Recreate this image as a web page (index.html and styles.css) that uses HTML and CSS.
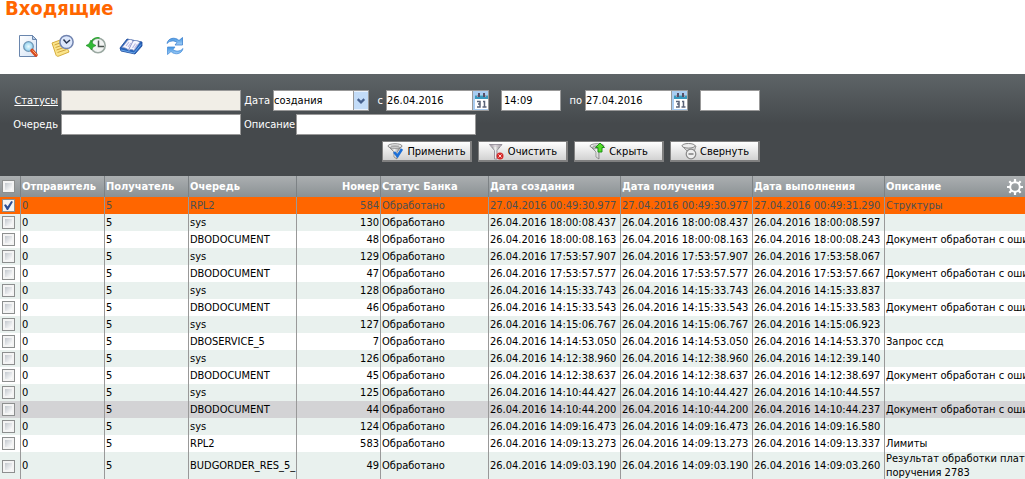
FILE: index.html
```
<!DOCTYPE html>
<html lang="ru">
<head>
<meta charset="utf-8">
<title>Входящие</title>
<link rel="stylesheet" href="styles.css">
</head>
<body>
<svg class="defs" width="0" height="0" aria-hidden="true">
  <defs>
    <linearGradient id="metal" x1="0" x2="1" y1="0" y2="0"><stop offset="0" stop-color="#555"/><stop offset=".45" stop-color="#f4f4f4"/><stop offset="1" stop-color="#666"/></linearGradient>
    <linearGradient id="paper" x1="0" x2="1" y1="0" y2="1"><stop offset="0" stop-color="#fff"/><stop offset="1" stop-color="#d3e2f4"/></linearGradient>
    <linearGradient id="blue" x1="0" x2="0" y1="0" y2="1"><stop offset="0" stop-color="#3f92df"/><stop offset="1" stop-color="#a4d0f8"/></linearGradient>
    <radialGradient id="glass"><stop offset="0" stop-color="#e8fbff"/><stop offset="1" stop-color="#8fcfee"/></radialGradient>
    <symbol id="calendar" viewBox="0 0 15 19">
      <path fill="#a9cdf2" d="M0 0h15v19H0z"/>
      <path fill="#fff" d="M2 8h13v10H2z"/>
      <path fill="#3999bf" d="M2 4h13v4H2z"/>
      <path fill="#77bcd5" d="M2 4h13v1H2z"/>
      <path fill="#555068" d="M5 2h2v4H5zM10 2h2v4h-2z"/>
      <path fill="#a899b0" d="M4 4h1v2H4zM12 4h1v2h-1z"/>
      <path fill="none" stroke="#5a6378" stroke-width="1.5" d="M4 10.5h3v5.5H4M5 13h2M10 10.5h1.500v5M9.500 16h4"/>
    </symbol>
    <symbol id="funnel" viewBox="0 0 18 18">
      <path fill="url(#metal)" stroke="#666" stroke-width=".6" d="M1 4l6 6v5l3 2v-7l5-6z"/>
      <ellipse cx="8" cy="4" rx="7" ry="2.300" fill="#ececec" stroke="#777" stroke-width=".8"/>
      <ellipse cx="8" cy="4.300" rx="4.500" ry="1" fill="#aaa"/>
    </symbol>
  </defs>
</svg>
<header class="top">
  <h1 class="title">Входящие</h1>
  <nav class="tools" aria-label="Действия">
    <button class="tool" type="button" aria-label="Просмотр"><svg width="22" height="24" viewBox="0 0 22 24"><path d="M1.500 1.500h13l4 4v17h-17z" fill="url(#paper)" stroke="#6a86ad"/><path d="M14.500 1.500v4h4z" fill="#b8cde6" stroke="#6a86ad"/><circle cx="10.500" cy="12.500" r="4.800" fill="url(#glass)" stroke="#6f96b5" stroke-width="1.300"/><path d="M14 16.500l4 4.500" stroke="#d84a20" stroke-width="3.600" stroke-linecap="round"/><path d="M14.500 16.500l4 4" stroke="#ffb070" stroke-width="1"/></svg></button>
    <button class="tool" type="button" aria-label="Отложенные"><svg width="24" height="24" viewBox="0 0 24 24"><path d="M1 9l11-4 6 13-10 4c-3 1-3-1-4-4z" fill="#fae48b" stroke="#d5ac3c"/><path d="M3.500 11l8-3M4.500 13.500l9-3M5.500 16l9-3M6.500 18.500l9-3" stroke="#c99b34" stroke-width=".9"/><circle cx="15.500" cy="8" r="6.600" fill="#dce7fb" stroke="#7184b0" stroke-width="1.500"/><path d="M12.500 5.500l3 3.500 3.500-3" fill="none" stroke="#26344f" stroke-width="1.500"/></svg></button>
    <button class="tool" type="button" aria-label="История"><svg width="22" height="24" viewBox="0 0 22 24"><circle cx="12" cy="11.500" r="7.200" fill="#f2f4f3" stroke="#9ba9a2" stroke-width="1.600"/><path d="M5.500 8a7 7 0 0 1 8-4" fill="none" stroke="#2da832" stroke-width="1.600"/><path d="M0 11.500l3-1.500 2-4 2 4 3 1.500-3 1.500-1.500 3L3 13z" fill="#31ba35" stroke="#16851d" stroke-width=".6"/><path d="M12.500 6.500v6H18" fill="none" stroke="#4c5650" stroke-width="1.500"/></svg></button>
    <button class="tool" type="button" aria-label="Справочник"><svg width="24" height="24" viewBox="0 0 24 24"><path d="M1 14L8 5l15 3v4l-7 8L2 17z" fill="#2864bb" stroke="#19479a" stroke-width=".8"/><path d="M3 13.500L9 6c2-1 4-.5 5 1 2-1 4-.5 7 1l-6 8.500c-2-1.500-4-1.500-5 0-2-2-4-3-7-3z" fill="#f7f7ff" stroke="#8290bd" stroke-width=".7"/><path d="M14 7l-4.500 9" stroke="#8086c0" stroke-width=".9"/><path d="M10 8l-3 4M12 9l-3 4M16.500 9.500l-3 4.500M18.500 10l-3 4.500" stroke="#b9bae2" stroke-width="1.200"/><path d="M2 16l13 3 7-8.500" fill="none" stroke="#69a6e8"/></svg></button>
    <button class="tool tool-apart" type="button" aria-label="Обновить"><svg width="20" height="20" viewBox="0 0 20 20"><path d="M2 7.500C3 2 10 .5 14 4.500l3.500-3V9H10l2-2.500C10 4.500 5 4 2 7.500z" fill="url(#blue)" stroke="#3e82cf" stroke-width=".8"/><path d="M18 12.500c-1 5.500-8 7-12 3l-3.500 3V11H10l-2 2.500c2 2 7 2.500 10-1z" fill="url(#blue)" stroke="#4b90da" stroke-width=".8"/></svg></button>
  </nav>
</header>

<form class="filter">
  <div class="row">
    <a class="label first" href="#statuses" id="st">Статусы</a>
    <input class="box wide off" type="text" aria-labelledby="st" readonly>
    <label class="label short" for="kind">Дата</label>
    <span class="combo"><select id="kind" class="box pick"><option>создания</option></select><svg class="arrow" width="15" height="19" viewBox="0 0 15 19" aria-hidden="true"><path fill="#c3dcf8" d="M0 0h15v19H0z"/><path d="M4 8l3.500 3.500L11 8" fill="none" stroke="#46618f" stroke-width="2.400"/></svg></span>
    <label class="label prep" for="from">с</label>
    <span class="date"><input id="from" class="day" type="text" value="26.04.2016"><button class="cal" type="button" aria-label="Календарь"><svg width="15" height="19"><use href="#calendar"/></svg></button></span>
    <input class="box time" type="text" value="14:09" aria-label="Время начала">
    <label class="label till" for="to">по</label>
    <span class="date"><input id="to" class="day" type="text" value="27.04.2016"><button class="cal" type="button" aria-label="Календарь"><svg width="15" height="19"><use href="#calendar"/></svg></button></span>
    <input class="box time" type="text" aria-label="Время окончания">
  </div>
  <div class="row">
    <label class="label first" for="queue">Очередь</label>
    <input id="queue" class="box wide" type="text">
    <label class="label long" for="descr">Описание</label>
    <input id="descr" class="box wide" type="text">
  </div>
  <div class="actions">
    <button class="action" type="button"><svg width="18" height="18" viewBox="0 0 18 18"><use href="#funnel"/><path d="M7 10l3.500 4L15 7" fill="none" stroke="#1d6fd6" stroke-width="2.600"/></svg>Применить</button>
    <button class="action" type="button"><svg width="18" height="18" viewBox="0 0 18 18"><path d="M1.500 2.500h12.500L9 8.500V17H6.500V8.500z" fill="url(#metal)" stroke="#8a8490" stroke-width=".8"/><path d="M2 4h11" stroke="#cfc3cf"/><circle cx="12" cy="14" r="3.500" fill="#d42a2a"/><path d="M10.500 12.500l3 3m0-3l-3 3" stroke="#ffd6d6"/></svg>Очистить</button>
    <button class="action" type="button"><svg width="18" height="18" viewBox="0 0 18 18"><use href="#funnel"/><path d="M11 1l4.500 4.500H13V10H9V5.500H6.500z" fill="#54dc28" stroke="#168a12" stroke-width=".9"/></svg>Скрыть</button>
    <button class="action" type="button"><svg width="18" height="18" viewBox="0 0 18 18"><path d="M2 4l6 6h6l2-6z" fill="#d8d8d8" stroke="#888" stroke-width=".8"/><ellipse cx="8.500" cy="3.800" rx="6.500" ry="2.300" fill="#eee" stroke="#888"/><circle cx="11" cy="12" r="4.800" fill="#eee" stroke="#888" stroke-width="1.200"/><path d="M8.500 12h5" stroke="#777" stroke-width="1.400"/></svg>Свернуть</button>
  </div>
</form>

<table class="grid">
  <colgroup><col class="c-check"><col class="c-s"><col class="c-s"><col class="c-m"><col class="c-s"><col class="c-m"><col class="c-l"><col class="c-l"><col class="c-l"><col></colgroup>
  <thead>
    <tr><th><input class="tick" type="checkbox" aria-label="Выбрать все"></th><th>Отправитель</th><th>Получатель</th><th>Очередь</th><th class="num">Номер</th><th>Статус Банка</th><th>Дата создания</th><th>Дата получения</th><th>Дата выполнения</th>
      <th><div class="last"><span>Описание</span><button class="gear" type="button" aria-label="Настройки"><svg width="18" height="18" viewBox="0 0 18 18"><circle cx="9" cy="9" r="4.800" fill="none" stroke="#fff" stroke-width="2"/><path d="M9 1v3M9 14v3M1 9h3M14 9h3M3.300 3.300l2.200 2.200M12.500 12.500l2.200 2.200M3.300 14.700l2.200-2.200M12.500 5.500l2.200-2.200" stroke="#fff" stroke-width="2.200"/></svg></button></div></th></tr>
  </thead>
  <tbody>
    <tr class="chosen"><td><input class="tick" type="checkbox" aria-label="584" checked></td><td>0</td><td>5</td><td>RPL2</td><td class="num">584</td><td>Обработано</td><td>27.04.2016 00:49:30.977</td><td>27.04.2016 00:49:30.977</td><td>27.04.2016 00:49:31.290</td><td>Структуры</td></tr>
    <tr><td><input class="tick" type="checkbox" aria-label="130"></td><td>0</td><td>5</td><td>sys</td><td class="num">130</td><td>Обработано</td><td>26.04.2016 18:00:08.437</td><td>26.04.2016 18:00:08.437</td><td>26.04.2016 18:00:08.597</td><td></td></tr>
    <tr><td><input class="tick" type="checkbox" aria-label="48"></td><td>0</td><td>5</td><td>DBODOCUMENT</td><td class="num">48</td><td>Обработано</td><td>26.04.2016 18:00:08.163</td><td>26.04.2016 18:00:08.163</td><td>26.04.2016 18:00:08.243</td><td>Документ обработан с ошибками</td></tr>
    <tr><td><input class="tick" type="checkbox" aria-label="129"></td><td>0</td><td>5</td><td>sys</td><td class="num">129</td><td>Обработано</td><td>26.04.2016 17:53:57.907</td><td>26.04.2016 17:53:57.907</td><td>26.04.2016 17:53:58.067</td><td></td></tr>
    <tr><td><input class="tick" type="checkbox" aria-label="47"></td><td>0</td><td>5</td><td>DBODOCUMENT</td><td class="num">47</td><td>Обработано</td><td>26.04.2016 17:53:57.577</td><td>26.04.2016 17:53:57.577</td><td>26.04.2016 17:53:57.667</td><td>Документ обработан с ошибками</td></tr>
    <tr><td><input class="tick" type="checkbox" aria-label="128"></td><td>0</td><td>5</td><td>sys</td><td class="num">128</td><td>Обработано</td><td>26.04.2016 14:15:33.743</td><td>26.04.2016 14:15:33.743</td><td>26.04.2016 14:15:33.837</td><td></td></tr>
    <tr><td><input class="tick" type="checkbox" aria-label="46"></td><td>0</td><td>5</td><td>DBODOCUMENT</td><td class="num">46</td><td>Обработано</td><td>26.04.2016 14:15:33.543</td><td>26.04.2016 14:15:33.543</td><td>26.04.2016 14:15:33.583</td><td>Документ обработан с ошибками</td></tr>
    <tr><td><input class="tick" type="checkbox" aria-label="127"></td><td>0</td><td>5</td><td>sys</td><td class="num">127</td><td>Обработано</td><td>26.04.2016 14:15:06.767</td><td>26.04.2016 14:15:06.767</td><td>26.04.2016 14:15:06.923</td><td></td></tr>
    <tr><td><input class="tick" type="checkbox" aria-label="7"></td><td>0</td><td>5</td><td>DBOSERVICE_5</td><td class="num">7</td><td>Обработано</td><td>26.04.2016 14:14:53.050</td><td>26.04.2016 14:14:53.050</td><td>26.04.2016 14:14:53.370</td><td>Запрос ссд</td></tr>
    <tr><td><input class="tick" type="checkbox" aria-label="126"></td><td>0</td><td>5</td><td>sys</td><td class="num">126</td><td>Обработано</td><td>26.04.2016 14:12:38.960</td><td>26.04.2016 14:12:38.960</td><td>26.04.2016 14:12:39.140</td><td></td></tr>
    <tr><td><input class="tick" type="checkbox" aria-label="45"></td><td>0</td><td>5</td><td>DBODOCUMENT</td><td class="num">45</td><td>Обработано</td><td>26.04.2016 14:12:38.637</td><td>26.04.2016 14:12:38.637</td><td>26.04.2016 14:12:38.697</td><td>Документ обработан с ошибками</td></tr>
    <tr><td><input class="tick" type="checkbox" aria-label="125"></td><td>0</td><td>5</td><td>sys</td><td class="num">125</td><td>Обработано</td><td>26.04.2016 14:10:44.427</td><td>26.04.2016 14:10:44.427</td><td>26.04.2016 14:10:44.557</td><td></td></tr>
    <tr class="hover"><td><input class="tick" type="checkbox" aria-label="44"></td><td>0</td><td>5</td><td>DBODOCUMENT</td><td class="num">44</td><td>Обработано</td><td>26.04.2016 14:10:44.200</td><td>26.04.2016 14:10:44.200</td><td>26.04.2016 14:10:44.237</td><td>Документ обработан с ошибками</td></tr>
    <tr><td><input class="tick" type="checkbox" aria-label="124"></td><td>0</td><td>5</td><td>sys</td><td class="num">124</td><td>Обработано</td><td>26.04.2016 14:09:16.473</td><td>26.04.2016 14:09:16.473</td><td>26.04.2016 14:09:16.580</td><td></td></tr>
    <tr><td><input class="tick" type="checkbox" aria-label="583"></td><td>0</td><td>5</td><td>RPL2</td><td class="num">583</td><td>Обработано</td><td>26.04.2016 14:09:13.273</td><td>26.04.2016 14:09:13.273</td><td>26.04.2016 14:09:13.337</td><td>Лимиты</td></tr>
    <tr><td><input class="tick" type="checkbox" aria-label="49"></td><td>0</td><td>5</td><td>BUDGORDER_RES_5_</td><td class="num">49</td><td>Обработано</td><td>26.04.2016 14:09:03.190</td><td>26.04.2016 14:09:03.190</td><td>26.04.2016 14:09:03.260</td><td>Результат обработки платежного<br>поручения 2783</td></tr>
  </tbody>
</table>
</body>
</html>
```

FILE: styles.css
```
* { box-sizing: border-box; }
body, input, select, button {
  font-family: Tahoma, "DejaVu Sans Condensed", "DejaVu Sans", sans-serif;
  font-size: 11px;
}
body { margin: 0; background: #fff; color: #000; overflow: hidden; }
button { padding: 0; border: 0; background: none; color: inherit; }
svg { display: block; flex: none; }
.defs { position: absolute; }

.top { display: flex; flex-direction: column; padding-bottom: 14px; }
.title { margin: 0; padding-left: 5px; color: #f60; font-size: 20px; line-height: 16px; font-weight: bold; }
.tools { display: flex; align-items: center; gap: 11px; padding: 18px 0 2px 18px; }
.tool { display: flex; align-items: center; }
.tool-apart { margin-left: 11px; }

.filter { padding: 16px 0 14px; background: linear-gradient(#5e6467, #45494c 50px); color: #fff; }
.row { display: flex; align-items: center; gap: 3px; margin-bottom: 3px; }
.label { color: #fff; white-space: nowrap; flex: none; text-align: right; line-height: 21px; }
.first { width: 58px; }
.short { width: 26px; }
.long { width: 49px; }
.prep { width: 11px; }
.till { width: 18px; }
.box, .date { height: 21px; border: 1px solid #999; background: #fff; border-radius: 0; }
.box { padding: 0 2px; color: #000; outline: 0; }
.wide { width: 180px; }
.off { background: #f1eee7; }
.combo { position: relative; width: 96px; }
.pick { display: block; width: 100%; padding: 0; appearance: none; }
.arrow { position: absolute; top: 1px; right: 1px; pointer-events: none; border-left: 1px solid #999; }
.date { display: flex; width: 103px; margin-right: 9px; }
.day { flex: 1; min-width: 0; padding: 0; border: 0; border-right: 1px solid #999; outline: 0; }
.time { width: 60px; }
.actions { display: flex; gap: 6px; padding: 3px 0 0 382px; }
.action {
  display: flex; align-items: center; justify-content: center; gap: 2px;
  width: 90px; height: 21px; border: 1px solid #808080; border-right-width: 2px; border-bottom-width: 2px;
  background: linear-gradient(#fff, #d2d2d2); color: #000;
}

.grid { width: 100%; table-layout: fixed; border-collapse: separate; border-spacing: 0; }
.c-check { width: 21px; }
.c-s { width: 84px; }
.c-m { width: 108px; }
.c-l { width: 132px; }
.grid th, .grid td {
  padding: 0 1px; height: 17px; border-right: 1px solid #999;
  text-align: left; line-height: 14px; white-space: nowrap; overflow: hidden; vertical-align: middle;
}
.grid th { height: 21px; background: linear-gradient(#abafb1, #8b9194); color: #fff; font-weight: bold; border-color: #7d8285; }
.grid th:last-child, .grid td:last-child { border-right: 0; }
.grid tr > :first-child { padding-left: 2px; }
.grid .num { text-align: right; }
.grid tbody tr:nth-child(even) { background: #e9f1ee; }
.grid tbody .chosen { background: #f60; color: #4c5054; }
.grid tbody .hover { background: #d3d3d5; }
.last { display: flex; align-items: center; justify-content: space-between; }
.tick {
  display: grid; place-items: center; width: 13px; height: 13px; margin: 0; appearance: none;
  border: 1px solid #8d8f8f; outline: 0; background: linear-gradient(135deg, #c3c8ce, #fff) content-box, #f4f4f4; padding: 2px;
}
.tick:checked { background: #f4f4f4; padding: 1px; }
.tick:checked::after { content: ""; width: 9px; height: 9px; background: #2d4f96; clip-path: polygon(0 45%, 20% 35%, 40% 60%, 80% 0, 100% 8%, 45% 100%, 32% 100%); }
```
